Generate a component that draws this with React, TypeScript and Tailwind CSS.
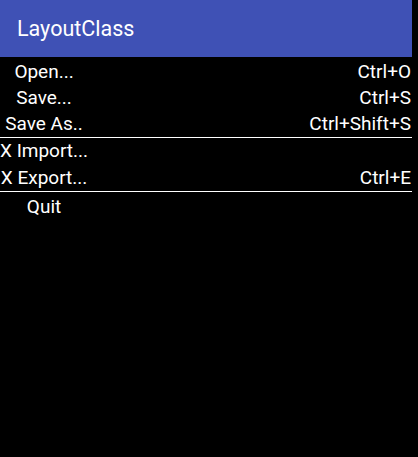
const items: ({ label: string; shortcut?: string; h?: string } | 'sep')[] = [
  { label: 'Open...', shortcut: 'Ctrl+O' },
  { label: 'Save...', shortcut: 'Ctrl+S' },
  { label: 'Save As..', shortcut: 'Ctrl+Shift+S' },
  'sep',
  { label: 'X Import...' },
  { label: 'X Export...', shortcut: 'Ctrl+E', h: 'h-[27px] leading-[27px]' },
  'sep',
  { label: 'Quit', h: 'h-[28px] leading-[29px]' },
];

export default function App() {
  return (
    <div className="min-h-screen w-full bg-black text-white" style={{ fontFamily: 'Roboto, "Liberation Sans", sans-serif' }}>
      <div className="w-[412px]">
        {/* Action bar */}
        <div className="flex h-[57px] items-center bg-[#3f51b5] pl-[17px]">
          <span className="text-[21.5px] leading-none">LayoutClass</span>
        </div>

        {/* Menu */}
        <div className="mt-[2px] grid grid-cols-[auto_1fr] text-[19px]">
          {items.map((item, i) =>
            item === 'sep' ? (
              <div key={i} className="col-span-2 h-px bg-white" />
            ) : (
              <div key={i} className="contents">
                <div className={`${item.h ?? 'h-[26px] leading-[26px]'} text-center`}>{item.label}</div>
                <div className={`${item.h ?? 'h-[26px] leading-[26px]'} pr-px text-right`}>{item.shortcut ?? ''}</div>
              </div>
            )
          )}
        </div>
      </div>
    </div>
  );
}
